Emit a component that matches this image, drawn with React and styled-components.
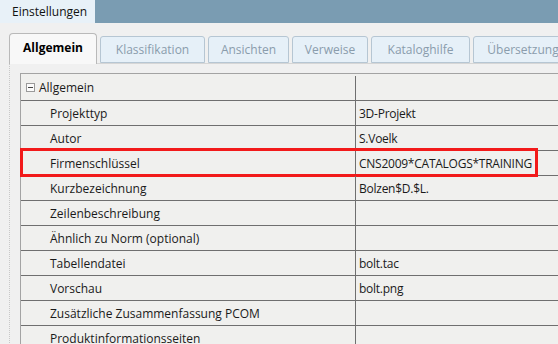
import React from "react";
import styled, { createGlobalStyle } from "styled-components";

const GlobalStyle = createGlobalStyle`
  html, body {
    margin: 0;
    padding: 0;
    background: #f0f0f0;
    overflow: hidden;
    font-family: "Open Sans", "Noto Sans", sans-serif;
    font-size: 12px;
    color: #1a1a1a;
  }
`;

const tabs = [
  { label: "Allgemein", width: 88, active: true },
  { label: "Klassifikation", width: 105 },
  { label: "Ansichten", width: 81 },
  { label: "Verweise", width: 76 },
  { label: "Kataloghilfe", width: 99 },
  { label: "Übersetzung", width: 100 },
];

const rows = [
  { label: "Projekttyp", value: "3D-Projekt" },
  { label: "Autor", value: "S.Voelk" },
  { label: "Firmenschlüssel", value: "CNS2009*CATALOGS*TRAINING", marked: true },
  { label: "Kurzbezeichnung", value: "Bolzen$D.$L." },
  { label: "Zeilenbeschreibung", value: "" },
  { label: "Ähnlich zu Norm (optional)", value: "" },
  { label: "Tabellendatei", value: "bolt.tac" },
  { label: "Vorschau", value: "bolt.png" },
  { label: "Zusätzliche Zusammenfassung PCOM", value: "" },
  { label: "Produktinformationsseiten", value: "" },
];

const App = () => {
  return (
    <Page>
      <GlobalStyle />
      <TopBar>
        <TitleTab>Einstellungen</TitleTab>
      </TopBar>
      <TabRow>
        {tabs.map((t) => (
          <Tab key={t.label} active={t.active} width={t.width}>
            {t.label}
          </Tab>
        ))}
      </TabRow>
      <Panel>
        <Grid>
          <CategoryRow>
            <NameCell>
              <Toggle />
              Allgemein
            </NameCell>
            <ValueCell category />
          </CategoryRow>
          {rows.map((r) => (
            <Row key={r.label}>
              <NameCell indent>{r.label}</NameCell>
              <ValueCell>{r.value}</ValueCell>
              {r.marked && <Marker />}
            </Row>
          ))}
        </Grid>
      </Panel>
    </Page>
  );
};

export default App;

const Page = styled.div`
  width: 558px;
  height: 344px;
  overflow: hidden;
`;

const TopBar = styled.div`
  height: 23px;
  background-color: #7a9cb2;
  display: flex;
`;

const TitleTab = styled.div`
  width: 95px;
  box-sizing: border-box;
  padding-left: 12px;
  display: flex;
  align-items: center;
  background-color: #e8f1f8;
  color: #111;
`;

const TabRow = styled.div`
  display: flex;
  align-items: flex-end;
  gap: 3px;
  margin-top: 10px;
  padding-left: 9px;
  height: 30px;
  position: relative;
  z-index: 1;
`;

const Tab = styled.div`
  flex: none;
  width: ${(p) => p.width}px;
  box-sizing: border-box;
  height: ${(p) => (p.active ? "31px" : "27px")};
  margin-bottom: ${(p) => (p.active ? "-1px" : "0")};
  display: flex;
  align-items: center;
  justify-content: center;
  border: 1px solid ${(p) => (p.active ? "#b9b9b9" : "#b6c6d3")};
  border-bottom: ${(p) => (p.active ? "none" : "1px solid #b6c6d3")};
  border-radius: ${(p) => (p.active ? "4px 4px 0 0" : "3px 3px 0 0")};
  background-color: ${(p) => (p.active ? "#f8f8f8" : "#e6f0f8")};
  color: ${(p) => (p.active ? "#000" : "#8a9cac")};
  font-weight: ${(p) => (p.active ? 700 : 400)};
  padding-bottom: ${(p) => (p.active ? "3px" : "0")};
`;

const Panel = styled.div`
  margin-left: 9px;
  border-left: 1px dotted #c8c8c8;
  border-top: 1px solid #d6d6d6;
  padding: 9px 0 0 10px;
  height: 300px;
`;

const Grid = styled.div`
  width: 620px;
  border-left: 1px solid #a3a3a3;
  border-top: 1px solid #a3a3a3;
  background-color: #f0f0ee;
`;

const Row = styled.div`
  position: relative;
  display: flex;
  height: 24px;
  border-bottom: 1px solid #6f6f6f;
`;

const CategoryRow = styled(Row)`
  height: 26px;
`;

const NameCell = styled.div`
  width: 334px;
  flex: none;
  display: flex;
  align-items: center;
  box-sizing: border-box;
  padding-left: ${(p) => (p.indent ? "29px" : "5px")};
  white-space: nowrap;
`;

const ValueCell = styled.div`
  flex: 1;
  display: flex;
  align-items: center;
  padding-left: 3px;
  border-left: 1px solid #6f6f6f;
  margin-top: ${(p) => (p.category ? "2px" : "0")};
  letter-spacing: -0.25px;
  white-space: nowrap;
`;

const Toggle = styled.span`
  position: relative;
  width: 9px;
  height: 9px;
  box-sizing: border-box;
  border: 1px solid #9a9a9a;
  background: #fbfbfb;
  margin-right: 4px;
  flex: none;

  &::after {
    content: "";
    position: absolute;
    left: 1px;
    right: 1px;
    top: 3px;
    height: 1px;
    background: #444;
  }
`;

const Marker = styled.div`
  position: absolute;
  left: -1px;
  top: -3px;
  width: 518px;
  height: 29px;
  box-sizing: border-box;
  border: 3px solid #f21a1a;
  pointer-events: none;
`;
